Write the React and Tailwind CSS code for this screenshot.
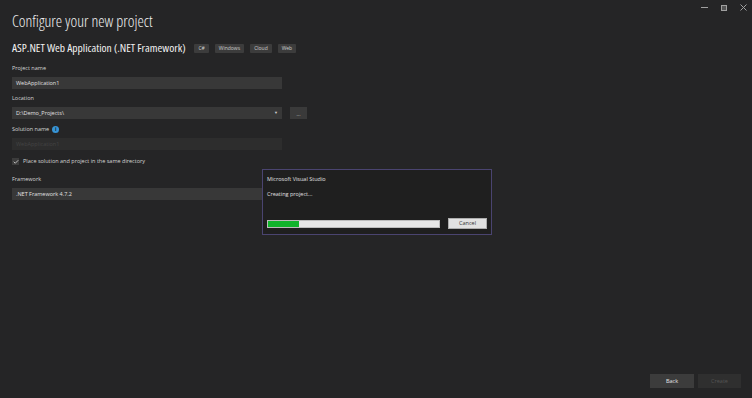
import { CheckIcon } from "lucide-react";

const TAGS = ["C#", "Windows", "Cloud", "Web"];

function Label({ children }) {
  return <div className="h-[9px] text-[5.5px] leading-[9px] text-[#d4d4d4]">{children}</div>;
}

export default function App() {
  return (
    <div
      className="relative h-[398px] w-[752px] overflow-hidden bg-[#252526] text-[#e6e6e6]"
      style={{ fontFamily: '"Open Sans", "Noto Sans", sans-serif' }}
    >
      {/* window controls */}
      <div className="absolute right-[5px] top-[4px] flex items-center gap-[13px]">
        <div className="h-px w-[7px] bg-[#a0a0a0]" />
        <div className="h-[6px] w-[6px] border border-[#a0a0a0] bg-[#555]" />
        <svg width="7" height="7" viewBox="0 0 7 7" stroke="#a0a0a0" strokeWidth="1">
          <path d="M0.5 0.5 L6.5 6.5 M6.5 0.5 L0.5 6.5" />
        </svg>
      </div>

      <div className="flex flex-col px-[12px] pt-[11px]">
        <h1 className="text-[16px] leading-[20px] font-light font-stretch-[75%] text-[#f0f0f0]">Configure your new project</h1>

        <div className="mt-[10px] flex items-center">
          <span className="text-[11.5px] leading-[14px] font-stretch-[75%] text-[#f0f0f0]">ASP.NET Web Application (.NET Framework)</span>
          <div className="ml-[9px] flex gap-[6px]">
            {TAGS.map((t) => (
              <span key={t} className="h-[9px] rounded-[1px] bg-[#3c3c3c] px-[4px] text-[5px] leading-[9px] text-[#cfcfcf]">
                {t}
              </span>
            ))}
          </div>
        </div>

        <div className="mt-[9px]"><Label>Project name</Label></div>
        <div className="mt-[4px] flex h-[12px] w-[270px] items-center bg-[#383838] px-[4px] text-[5.5px] text-[#e0e0e0]">
          WebApplication1
        </div>

        <div className="mt-[5px]"><Label>Location</Label></div>
        <div className="mt-[4px] flex items-center gap-[8px]">
          <div className="flex h-[12px] w-[270px] items-center justify-between bg-[#383838] px-[4px] text-[5.5px] text-[#e0e0e0]">
            <span>D:\Demo_Projects\</span>
            <span className="text-[4px] text-[#cfcfcf]">▼</span>
          </div>
          <div className="flex h-[12px] w-[17px] items-end justify-center bg-[#3a3a3a] pb-[2px] text-[5px] leading-[5px] text-[#cfcfcf]">
            ...
          </div>
        </div>

        <div className="mt-[6px] flex items-center gap-[3px]">
          <Label>Solution name</Label>
          <span className="flex h-[7px] w-[7px] items-center justify-center rounded-full bg-[#3794d6] text-[5px] font-bold leading-none text-[#1e1e1e]">
            i
          </span>
        </div>
        <div className="mt-[4px] flex h-[12px] w-[270px] items-center bg-[#2d2d2d] px-[4px] text-[5.5px] text-[#444]">
          WebApplication1
        </div>

        <div className="mt-[7px] flex items-center gap-[4px]">
          <div className="flex h-[7px] w-[7px] items-center justify-center bg-[#3c3c3c]">
            <CheckIcon className="h-[6px] w-[6px] text-[#e6e6e6]" strokeWidth={3} />
          </div>
          <span className="text-[5.5px] leading-[9px] text-[#d4d4d4]">Place solution and project in the same directory</span>
        </div>

        <div className="mt-[9px]"><Label>Framework</Label></div>
        <div className="mt-[4px] flex h-[12px] w-[270px] items-center bg-[#383838] px-[4px] text-[5.5px] text-[#e0e0e0]">
          .NET Framework 4.7.2
        </div>
      </div>

      {/* progress dialog */}
      <div className="absolute left-[262px] top-[169px] flex h-[66px] w-[230px] flex-col border border-[#4a4470] bg-[#1f1f1f] px-[4px]">
        <div className="mt-[5px] text-[5.5px] leading-[9px] text-[#e0e0e0]">Microsoft Visual Studio</div>
        <div className="mt-[6px] text-[5.5px] leading-[9px] text-[#e0e0e0]">Creating project...</div>
        <div className="mb-[5px] mt-auto flex items-center gap-[8px]">
          <div className="flex h-[8px] w-[174px] border border-[#bcbcbc] bg-[#e6e6e6]">
            <div className="h-full w-[31px] bg-[#10b42b]" />
          </div>
          <div className="flex h-[11px] w-[39px] items-center justify-center border border-[#adadad] bg-[#e1e1e1] text-[5.5px] text-[#333]">
            Cancel
          </div>
        </div>
      </div>

      {/* footer buttons */}
      <div className="absolute bottom-[10px] right-[11px] flex gap-[4px]">
        <div className="flex h-[14px] w-[44px] items-center justify-center bg-[#3c3c3c] text-[5.5px] text-[#e6e6e6]">Back</div>
        <div className="flex h-[14px] w-[43px] items-center justify-center bg-[#2f2f2f] text-[5.5px] text-[#555]">Create</div>
      </div>
    </div>
  );
}
